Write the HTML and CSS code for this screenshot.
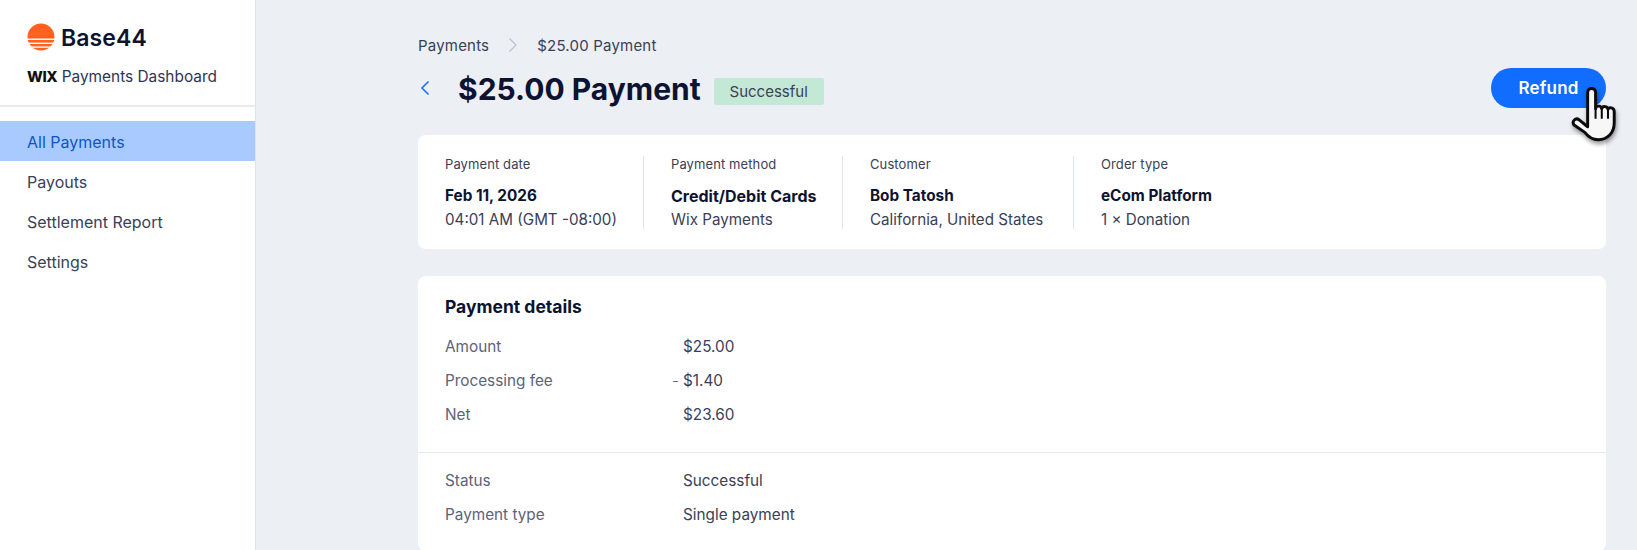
FILE: index.html
```html
<!DOCTYPE html>
<html lang="en">
<head>
<meta charset="utf-8">
<title>Payments Dashboard</title>
<link rel="stylesheet" href="styles.css">
</head>
<body>
<div class="app">
  <aside class="sidebar">
    <div class="brand">
      <div class="logo-row">
        <svg class="logo" viewBox="0 0 28 28" width="28" height="28" aria-hidden="true">
          <defs><clipPath id="c"><circle cx="14" cy="14" r="13.5"/></clipPath></defs>
          <g clip-path="url(#c)">
            <rect x="0" y="0" width="28" height="15.5" fill="#ff6120"/>
            <rect x="0" y="17" width="28" height="2.600" fill="#ff6120"/>
            <rect x="0" y="21" width="28" height="2.400" fill="#ff6120"/>
            <rect x="0" y="24.800" width="28" height="3.200" fill="#ff6120"/>
          </g>
        </svg>
        <span class="logo-text">Base44</span>
      </div>
      <div class="subtitle"><span class="wix">WIX</span> Payments Dashboard</div>
    </div>
    <nav class="nav">
      <a class="nav-item active">All Payments</a>
      <a class="nav-item">Payouts</a>
      <a class="nav-item">Settlement Report</a>
      <a class="nav-item">Settings</a>
    </nav>
  </aside>
  <main class="main">
    <div class="breadcrumb">
      <span>Payments</span>
      <svg class="crumb-sep" width="10" height="16" viewBox="0 0 10 16" aria-hidden="true"><path d="M1.500 1.500 8 8l-6.500 6.500" fill="none" stroke="#b9bfd2" stroke-width="1.200"/></svg>
      <span>$25.00 Payment</span>
    </div>
    <header class="head">
      <svg class="back" width="10" height="16" viewBox="0 0 10 16" aria-hidden="true"><path d="M8.500 1.500 2 8l6.500 6.500" fill="none" stroke="#116dff" stroke-width="1.500"/></svg>
      <h1 class="title">$25.00 Payment</h1>
      <span class="badge">Successful</span>
      <button class="refund">Refund</button>
    </header>
    <section class="card summary">
      <div class="col col-date">
        <div class="col-label">Payment date</div>
        <div class="col-main">Feb 11, 2026</div>
        <div class="col-sub">04:01 AM (GMT -08:00)</div>
      </div>
      <div class="col col-method">
        <div class="col-label">Payment method</div>
        <div class="col-main">Credit/Debit Cards</div>
        <div class="col-sub">Wix Payments</div>
      </div>
      <div class="col col-customer">
        <div class="col-label">Customer</div>
        <div class="col-main">Bob Tatosh</div>
        <div class="col-sub">California, United States</div>
      </div>
      <div class="col">
        <div class="col-label">Order type</div>
        <div class="col-main">eCom Platform</div>
        <div class="col-sub">1 × Donation</div>
      </div>
    </section>
    <section class="card details">
      <div class="block">
        <h2 class="details-title">Payment details</h2>
        <div class="row"><span class="key">Amount</span><span class="val">$25.00</span></div>
        <div class="row"><span class="key">Processing fee</span><span class="val"><span class="minus">-</span>$1.40</span></div>
        <div class="row"><span class="key">Net</span><span class="val">$23.60</span></div>
      </div>
      <div class="block lower">
        <div class="row"><span class="key">Status</span><span class="val">Successful</span></div>
        <div class="row"><span class="key">Payment type</span><span class="val">Single payment</span></div>
      </div>
    </section>
  </main>
</div>
<svg class="cursor" width="52" height="64" viewBox="0 0 46 56" aria-hidden="true">
  <path d="M16.500 7c0-4.500 7-4.500 7 0v14.500c.5-3 5-3 5.500 0 .5-2.500 5-2.500 5.500.5.8-2.300 5.500-1.500 5.500 2v10c0 9-6 15-14 15-6 0-9-2.500-12-6.500L4.500 36c-2.500-3.500 1.500-7 4.500-4.500l7.500 6z" fill="#f7f7f7" stroke="#0b0b0b" stroke-width="2.600" stroke-linejoin="round"/>
  <path d="M23.500 21.500v9M29 22v8.500M34.500 22.500v8" stroke="#0b0b0b" stroke-width="1.800" fill="none"/>
</svg>
</body>
</html>
```
FILE: styles.css
```css
* { box-sizing: border-box; }
html, body { margin: 0; height: 100%; overflow: hidden; }
body {
  font-family: Inter, "Noto Sans", sans-serif;
  color: #3b4057;
  background: #eceff4;
  position: relative;
}
.app { display: flex; height: 550px; overflow: hidden; }
.sidebar {
  width: 256px;
  flex: none;
  background: #fff;
  border-right: 1px solid #dfe3ea;
}
.brand {
  height: 107px;
  padding: 23px 0 0 27px;
  border-bottom: 2px solid #e9ebf0;
}
.logo-row { display: flex; align-items: center; gap: 6px; height: 28px; }
.logo { display: block; }
.logo-text { padding-top: 2px; font-size: 23px; font-weight: 600; color: #0d1330; letter-spacing: .1px; }
.subtitle { margin-top: 16px; font-size: 15.400px; line-height: 20px; color: #2f3552; }
.wix { font-weight: 800; color: #111; letter-spacing: -.4px; font-size: 15px; }
.nav { padding-top: 14px; display: flex; flex-direction: column; }
.nav-item {
  height: 40px;
  padding: 1px 0 0 27px;
  display: flex;
  align-items: center;
  font-size: 16px;
  color: #3b4057;
}
.nav-item.active { background: #a8caff; color: #0f56c4; }
.main { flex: 1; padding: 35px 31px 0 162px; min-width: 0; }
.breadcrumb { display: flex; align-items: center; height: 20px; font-size: 15px; letter-spacing: .2px; color: #3b4057; }
.crumb-sep { margin: 0 19px 0 19px; }
.head { display: flex; align-items: center; height: 40px; margin-top: 13px; }
.back { flex: none; margin-left: 2px; }
.title { margin: 2px 0 0 28px; font-size: 30px; line-height: 40px; font-weight: 700; color: #0d1330; }
.badge {
  margin: 6px 0 0 13px;
  height: 27px;
  width: 110px;
  background: #c3e8d5;
  border-radius: 2px;
  font-size: 15px;
  display: flex;
  align-items: center;
  justify-content: center;
}
.refund {
  margin-left: auto;
  width: 115px;
  height: 40px;
  border: 0;
  border-radius: 20px;
  background: #116dff;
  color: #fff;
  font: 600 17px Inter, sans-serif;
  letter-spacing: .2px;
}
.card { background: #fff; border-radius: 8px; }
.summary { display: flex; height: 114px; margin-top: 27px; padding: 21px 0 0; }
.col { height: 73px; padding: 0 0 0 27px; border-left: 1px solid #dfe5f0; flex: none; white-space: nowrap; }
.col:first-child { border-left: 0; }
.col-date { width: 225px; }
.col-method { width: 199px; }
.col-customer { width: 231px; }
.col-label { font-size: 13px; letter-spacing: .1px; line-height: 16px; color: #3b4057; }
.col-main { margin-top: 13px; font-size: 15.300px; line-height: 22px; font-weight: 700; color: #0d1330; }
.col-method .col-main { font-size: 16px; }
.col-sub { margin-top: 1px; font-size: 15.200px; line-height: 24px; color: #3b4057; }
.details { margin-top: 27px; height: 275px; }
.block { padding: 20px 27px 0; border-bottom: 1px solid #e4e8f0; height: 177px; }
.lower { padding: 10px 27px 0; border-bottom: 0; height: auto; }
.details-title { margin: 0 0 11.500px; font-size: 17.500px; line-height: 22px; font-weight: 700; color: #0d1330; }
.row { display: flex; height: 34px; align-items: center; font-size: 15.300px; }
.key { width: 238px; color: #5d6278; }
.val { position: relative; color: #3b4057; }
.minus { position: absolute; right: 100%; margin-right: 4px; color: #5d6278; font-weight: 300; }
.cursor { position: absolute; left: 1569px; top: 84px; filter: drop-shadow(1px 3px 2px rgba(0,0,0,.4)); }
```
